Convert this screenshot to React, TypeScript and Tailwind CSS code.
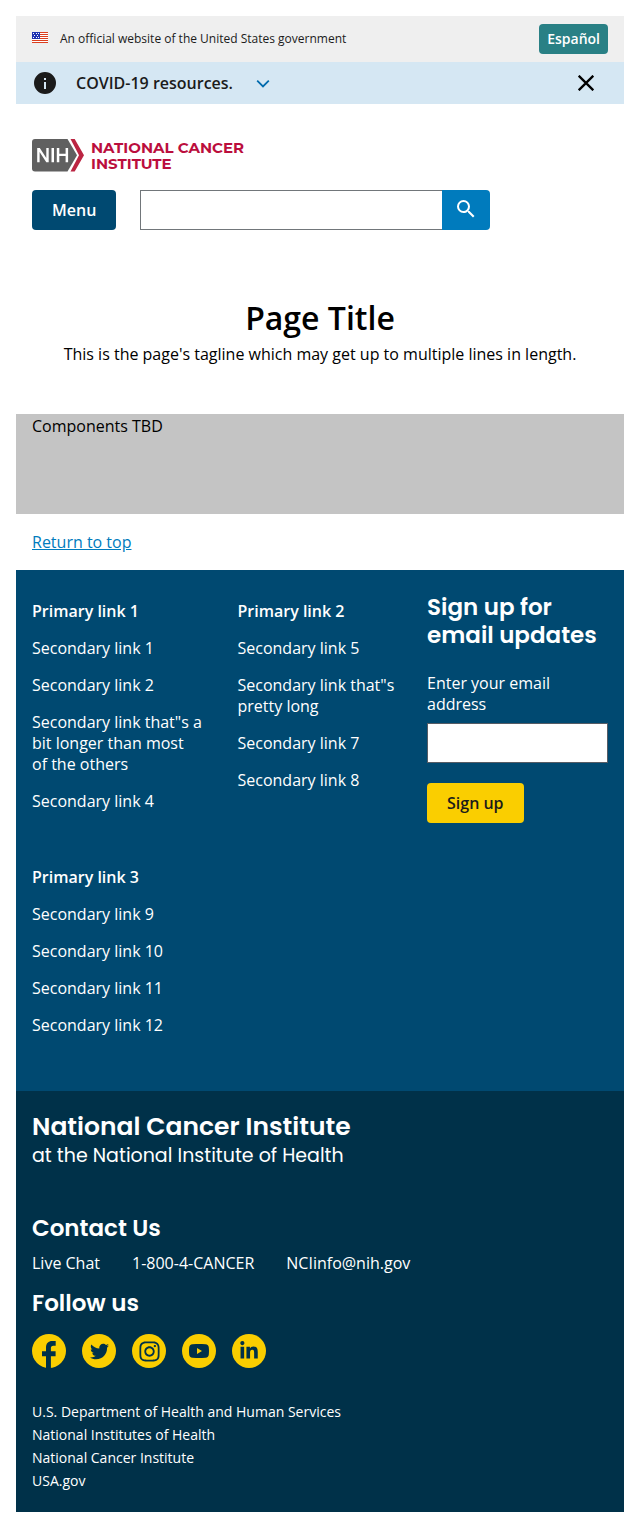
import { useState } from 'react';
import type { ReactNode } from 'react';
import { FaInstagram, FaLinkedinIn, FaTwitter } from 'react-icons/fa';

const sections = [
  {
    title: 'Primary link 1',
    links: ['Secondary link 1', 'Secondary link 2', 'Secondary link that"s a bit longer than most of\u00a0the others', 'Secondary link 4'],
  },
  {
    title: 'Primary link 2',
    links: ['Secondary link 5', 'Secondary link that"s pretty long', 'Secondary link 7', 'Secondary link 8'],
  },
  {
    title: 'Primary link 3',
    links: ['Secondary link 9', 'Secondary link 10', 'Secondary link 11', 'Secondary link 12'],
  },
];

const agencies = [
  'U.S. Department of Health and Human Services',
  'National Institutes of Health',
  'National Cancer Institute',
  'USA.gov',
];

const stars = [
  [1, 1], [4, 1], [6, 1],
  [2, 3], [5, 3],
  [1, 5], [4, 5], [6, 5],
];

function Flag() {
  return (
    <svg width="16" height="11" viewBox="0 0 16 11" shapeRendering="crispEdges" className="mb-[3px]" aria-hidden="true">
      <path fill="#fff" d="M0 0h16v11H0z" />
      <path fill="#db3e1f" d="M0 0h16v1H0zM0 2h16v1H0zM0 4h16v1H0zM0 6h16v1H0zM0 8h16v1H0zM0 10h16v1H0z" />
      <path fill="#1e33b1" d="M0 0h8v7H0z" />
      {stars.map(([x, y]) => (
        <rect key={`${x}-${y}`} x={x} y={y} width="1" height="1" fill="#fff" />
      ))}
    </svg>
  );
}

function Logo() {
  return (
    <a href="#home" className="flex items-center gap-[7px]">
      <svg width="52" height="33" viewBox="0 0 52 33" aria-hidden="true">
        <path fill="#606060" d="M3 0h32.500l9.500 16.200-9.500 16.300H3a3 3 0 0 1-3-3V3a3 3 0 0 1 3-3z" />
        <path fill="#bb2542" d="M38.500 0h4.200l9.300 16.200-9.300 16.300h-4.200L47 16.200z" />
        <path fill="#fff" d="M5.200 9h2.600l6.500 10V9h2.400v14.300h-2.400l-6.700-10.200v10.200H5.200zM19.500 9h2.500v14.300h-2.500zM24.800 9h2.500v5.800h6.300V9h2.500v14.300h-2.500v-6.300h-6.300v6.300h-2.500z" />
      </svg>
      <span className="font-['Montserrat','Inter',sans-serif] text-[15px] leading-4 font-bold text-[#bb0e3d]">
        NATIONAL CANCER
        <br />
        INSTITUTE
      </span>
    </a>
  );
}

function Social({ label, children }: { label: string; children: ReactNode }) {
  return (
    <a
      href="#follow"
      aria-label={label}
      className="flex size-[34px] items-center justify-center rounded-full bg-[#face00] text-[#003149]"
    >
      {children}
    </a>
  );
}

function Banner() {
  return (
    <div className="flex h-[46px] items-center justify-between bg-[#efefef] px-4">
      <div className="flex items-center gap-3">
        <Flag />
        <p className="text-xs">An official website of the United States government</p>
      </div>
      <button className="h-[30px] rounded bg-[#298085] px-2 text-sm font-semibold text-white">Español</button>
    </div>
  );
}

function Alert({ onClose }: { onClose: () => void }) {
  return (
    <div className="flex h-[42px] items-center justify-between bg-[#d5e7f3] pr-[30px] pl-[17px]">
      <div className="flex items-center">
        <svg width="24" height="24" viewBox="0 0 24 24" fill="#1b1b1b" aria-hidden="true">
          <path d="M12 1a11 11 0 1 0 0 22 11 11 0 0 0 0-22zm1 17h-2v-7h2v7zm0-9h-2V7h2v2z" />
        </svg>
        <p className="ml-[19px] font-semibold">COVID-19 resources.</p>
        <button aria-label="Show details" className="ml-[23px]">
          <svg width="14" height="14" viewBox="0 0 14 14" fill="none" stroke="#006bad" strokeWidth="1.800" aria-hidden="true">
            <path d="M1.200 4.700 7 10.400l5.800-5.700" />
          </svg>
        </button>
      </div>
      <button aria-label="Close alert" onClick={onClose}>
        <svg width="16" height="16" viewBox="0 0 16 16" fill="none" stroke="#000" strokeWidth="2.300" aria-hidden="true">
          <path d="m.7.7 14.600 14.600M15.300.7.7 15.300" />
        </svg>
      </button>
    </div>
  );
}

export default function App() {
  const [alertOpen, setAlertOpen] = useState(true);

  return (
    <div id="top" className="p-4 font-['Open_Sans',sans-serif] text-base leading-[21px] text-[#1b1b1b]">
      <Banner />
      {alertOpen && <Alert onClose={() => setAlertOpen(false)} />}

      <header className="px-4 pt-[35px]">
        <Logo />
        <div className="mt-[18px] flex gap-6">
          <button className="h-10 rounded bg-[#004971] px-5 font-semibold text-white">Menu</button>
          <form role="search" className="flex w-full max-w-[350px]" onSubmit={(e) => e.preventDefault()}>
            <input type="search" aria-label="Search" className="h-10 min-w-0 flex-1 border border-r-0 border-[#71767a] px-2" />
            <button aria-label="Submit search" className="flex h-10 w-12 items-center justify-center rounded-r bg-[#007bbd] pb-0.5">
              <svg width="24" height="24" viewBox="0 0 24 24" fill="#fff" aria-hidden="true">
                <path d="M15.500 14h-.79l-.28-.27A6.471 6.471 0 0 0 16 9.500 6.500 6.500 0 1 0 9.500 16c1.610 0 3.090-.59 4.230-1.570l.27.28v.79l5 4.990L20.490 19l-4.990-5zm-6 0C7.010 14 5 11.990 5 9.500S7.010 5 9.500 5 14 7.010 14 9.500 11.990 14 9.500 14z" />
              </svg>
            </button>
          </form>
        </div>
      </header>

      <main className="text-black">
        <div className="px-4 pt-[68px] pb-12 text-center">
          <h1 className="text-[32px] leading-10 font-semibold">Page Title</h1>
          <p className="mt-1 leading-6">This is the page's tagline which may get up to multiple lines in length.</p>
        </div>
        <div className="min-h-[100px] bg-[#c4c4c4] px-4 leading-6">Components TBD</div>
      </main>

      <footer>
        <div className="px-4 py-4 leading-6">
          <a href="#top" className="text-[#007bbd] underline">Return to top</a>
        </div>

        <div className="flex gap-4 bg-[#004971] px-4 pb-[55px] text-white">
          <nav aria-label="Footer" className="grid flex-1 grid-cols-2 content-start gap-x-8 gap-y-[55px] pt-[31px]">
            {sections.map((section) => (
              <section key={section.title}>
                <h3 className="font-semibold">{section.title}</h3>
                <ul>
                  {section.links.map((link) => (
                    <li key={link} className="mt-4">
                      <a href="#link">{link}</a>
                    </li>
                  ))}
                </ul>
              </section>
            ))}
          </nav>
          <form className="w-[181px] pt-[23px]" onSubmit={(e) => e.preventDefault()}>
            <h3 className="font-['Poppins','Inter',sans-serif] text-[23px] leading-7 font-semibold">Sign up for email updates</h3>
            <label htmlFor="email" className="mt-6 block">Enter your email address</label>
            <input id="email" type="email" className="mt-2 block h-10 w-full border border-[#565c65] bg-white px-2 text-[#1b1b1b]" />
            <button className="mt-5 h-10 rounded bg-[#face00] px-5 font-semibold text-[#1b1b1b]">Sign up</button>
          </form>
        </div>

        <div className="bg-[#003149] px-4 pt-5 pb-5 text-white">
          <div className="font-['Poppins','Inter',sans-serif]">
            <p className="text-[25px] leading-8 font-semibold">National Cancer Institute</p>
            <p className="text-[19px] leading-[26px]">at the National Institute of Health</p>
          </div>
          <h3 className="mt-[45px] font-['Poppins','Inter',sans-serif] text-[23px] leading-7 font-semibold">Contact Us</h3>
          <div className="mt-[11px] flex flex-wrap gap-x-8">
            <a href="#chat">Live Chat</a>
            <a href="tel:1-800-4-CANCER">1-800-4-CANCER</a>
            <a href="mailto:NCIinfo@nih.gov">NCIinfo@nih.gov</a>
          </div>
          <h3 className="mt-[15px] font-['Poppins','Inter',sans-serif] text-[23px] leading-7 font-semibold">Follow us</h3>
          <div className="mt-[17px] flex gap-4">
            <Social label="Facebook">
              <svg width="34" height="34" viewBox="0 0 34 34" fill="currentColor" aria-hidden="true">
                <path d="M14 34V22.200H10v-4.900h4v-3.800c0-4.200 2.500-6.500 6.200-6.500h3.500v4.700h-2.300c-1.900 0-2.500 1-2.500 2.300v3.300h4.700v4.900h-4.700V34z" />
              </svg>
            </Social>
            <Social label="Twitter"><FaTwitter size={19} /></Social>
            <Social label="Instagram"><FaInstagram size={23} /></Social>
            <Social label="YouTube">
              <svg width="20" height="14" viewBox="0 0 20 14" fill="currentColor" aria-hidden="true">
                <path fillRule="evenodd" d="M3.500.2Q10-.3 16.500.2 19.600.4 19.800 3.500q.4 3.500 0 7-.2 3.100-3.300 3.300-6.500.5-13 0Q.4 13.600.2 10.500q-.4-3.500 0-7Q.4.4 3.500.2zM8 4v6l5-3z" />
              </svg>
            </Social>
            <Social label="LinkedIn"><FaLinkedinIn size={20} /></Social>
          </div>
          <ul className="mt-8 text-sm leading-[23px]">
            {agencies.map((agency) => (
              <li key={agency}>
                <a href="#agency">{agency}</a>
              </li>
            ))}
          </ul>
        </div>
      </footer>
    </div>
  );
}
